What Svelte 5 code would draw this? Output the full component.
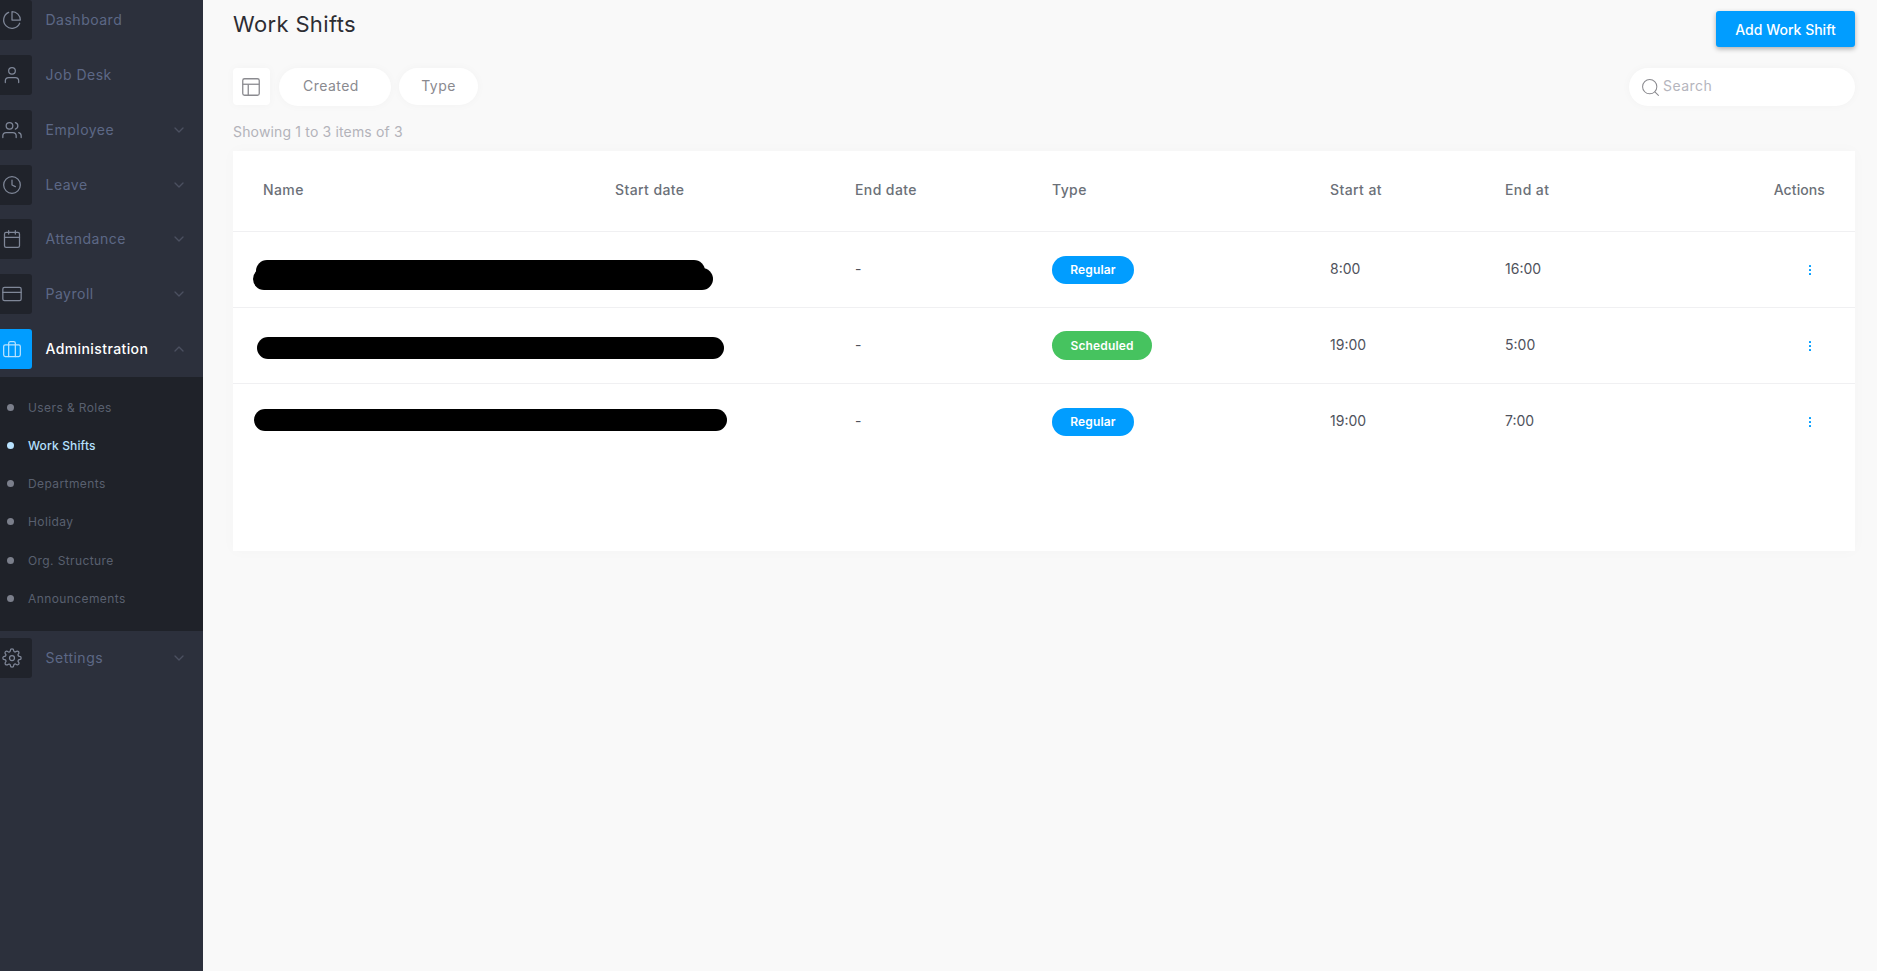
<script>
  const icons = {
    pie: '<path d="M21.21 15.89A10 10 0 1 1 8 2.83"/><path d="M22 12A10 10 0 0 0 12 2v10z"/>',
    user: '<path d="M20 21v-2a4 4 0 0 0-4-4H8a4 4 0 0 0-4 4v2"/><circle cx="12" cy="7" r="4"/>',
    users: '<path d="M17 21v-2a4 4 0 0 0-4-4H5a4 4 0 0 0-4 4v2"/><circle cx="9" cy="7" r="4"/><path d="M23 21v-2a4 4 0 0 0-3-3.87"/><path d="M16 3.13a4 4 0 0 1 0 7.75"/>',
    clock: '<circle cx="12" cy="12" r="10"/><polyline points="12 6 12 12 16 14"/>',
    calendar: '<rect x="3" y="4" width="18" height="18" rx="2"/><line x1="16" y1="2" x2="16" y2="6"/><line x1="8" y1="2" x2="8" y2="6"/><line x1="3" y1="10" x2="21" y2="10"/>',
    card: '<rect x="1" y="4" width="22" height="16" rx="2"/><line x1="1" y1="10" x2="23" y2="10"/>',
    briefcase: '<rect x="2" y="7" width="20" height="14" rx="2"/><path d="M16 21V5a2 2 0 0 0-2-2h-4a2 2 0 0 0-2 2v16"/>',
    settings: '<circle cx="12" cy="12" r="3"/><path d="M19.4 15a1.65 1.65 0 0 0 .33 1.82l.06.06a2 2 0 0 1 0 2.83 2 2 0 0 1-2.83 0l-.06-.06a1.65 1.65 0 0 0-1.82-.33 1.65 1.65 0 0 0-1 1.51V21a2 2 0 0 1-2 2 2 2 0 0 1-2-2v-.09A1.65 1.65 0 0 0 9 19.4a1.65 1.65 0 0 0-1.82.33l-.06.06a2 2 0 0 1-2.83 0 2 2 0 0 1 0-2.83l.06-.06a1.65 1.65 0 0 0 .33-1.82 1.65 1.65 0 0 0-1.51-1H3a2 2 0 0 1-2-2 2 2 0 0 1 2-2h.09A1.65 1.65 0 0 0 4.6 9a1.65 1.65 0 0 0-.33-1.82l-.06-.06a2 2 0 0 1 0-2.83 2 2 0 0 1 2.83 0l.06.06a1.65 1.65 0 0 0 1.82.33H9a1.65 1.65 0 0 0 1-1.51V3a2 2 0 0 1 2-2 2 2 0 0 1 2 2v.09a1.65 1.65 0 0 0 1 1.51 1.65 1.65 0 0 0 1.82-.33l.06-.06a2 2 0 0 1 2.83 0 2 2 0 0 1 0 2.83l-.06.06a1.65 1.65 0 0 0-.33 1.82V9a1.65 1.65 0 0 0 1.51 1H21a2 2 0 0 1 2 2 2 2 0 0 1-2 2h-.09a1.65 1.65 0 0 0-1.51 1z"/>'
  };
  const nav = [
    { label: 'Dashboard', icon: 'pie', chev: false },
    { label: 'Job Desk', icon: 'user', chev: false },
    { label: 'Employee', icon: 'users', chev: true },
    { label: 'Leave', icon: 'clock', chev: true },
    { label: 'Attendance', icon: 'calendar', chev: true },
    { label: 'Payroll', icon: 'card', chev: true }
  ];
  const sub = ['Users & Roles', 'Work Shifts', 'Departments', 'Holiday', 'Org. Structure', 'Announcements'];
  const rows = [
    { type: 'Regular', start: '8:00', end: '16:00', cls: 'blue', marks: ['m1a', 'm1b'] },
    { type: 'Scheduled', start: '19:00', end: '5:00', cls: 'green', marks: ['m2'] },
    { type: 'Regular', start: '19:00', end: '7:00', cls: 'blue', marks: ['m3'] }
  ];
</script>

<div class="app">
  <aside class="sidebar">
    {#each nav as n}
      <div class="nav">
        <span class="tile"><svg viewBox="0 0 24 24">{@html icons[n.icon]}</svg></span>
        <span class="label">{n.label}</span>
        {#if n.chev}<svg class="chev" viewBox="0 0 24 24"><polyline points="6 9 12 15 18 9"/></svg>{/if}
      </div>
    {/each}
    <div class="nav active">
      <span class="tile"><svg viewBox="0 0 24 24">{@html icons.briefcase}</svg></span>
      <span class="label">Administration</span>
      <svg class="chev" viewBox="0 0 24 24"><polyline points="18 15 12 9 6 15"/></svg>
    </div>
    <div class="submenu">
      {#each sub as s}
        <div class="subitem" class:on={s === 'Work Shifts'}><i></i><span>{s}</span></div>
      {/each}
    </div>
    <div class="nav">
      <span class="tile"><svg viewBox="0 0 24 24">{@html icons.settings}</svg></span>
      <span class="label">Settings</span>
      <svg class="chev" viewBox="0 0 24 24"><polyline points="6 9 12 15 18 9"/></svg>
    </div>
  </aside>

  <main class="main">
    <header class="head">
      <h1>Work Shifts</h1>
      <button class="add">Add Work Shift</button>
    </header>

    <div class="filters">
      <div class="left">
        <button class="square" aria-label="Layout">
          <svg viewBox="0 0 24 24"><rect x="3" y="3" width="18" height="18" rx="2"/><line x1="3" y1="9" x2="21" y2="9"/><line x1="9" y1="21" x2="9" y2="9"/></svg>
        </button>
        <button class="pill created">Created</button>
        <button class="pill type">Type</button>
      </div>
      <label class="search">
        <svg viewBox="0 0 24 24"><circle cx="11" cy="11" r="9"/><line x1="22" y1="22" x2="17.5" y2="17.5"/></svg>
        <input placeholder="Search" />
      </label>
    </div>

    <p class="count">Showing 1 to 3 items of 3</p>

    <section class="card">
      <div class="grid thead">
        <span>Name</span><span>Start date</span><span>End date</span><span>Type</span><span>Start at</span><span>End at</span><span class="act">Actions</span>
      </div>
      {#each rows as r}
        <div class="grid row">
          {#each r.marks as m}<b class="mark {m}"></b>{/each}
          <span></span><span></span>
          <span>-</span>
          <span class="bc"><em class="badge {r.cls}">{r.type}</em></span>
          <span>{r.start}</span>
          <span>{r.end}</span>
          <span class="act">
            <svg class="dots" viewBox="0 0 4 12"><rect x="1" y="1" width="2" height="2" rx="0.5"/><rect x="1" y="5" width="2" height="2" rx="0.5"/><rect x="1" y="9" width="2" height="2" rx="0.5"/></svg>
          </span>
        </div>
      {/each}
    </section>
  </main>
</div>

<style>
  :global(body) { margin: 0; background: #f9f9f9; }
  .app {
    display: flex;
    height: 971px;
    overflow: hidden;
    font-family: "Inter", "Open Sans", sans-serif;
  }
  .sidebar {
    width: 203px;
    flex: none;
    background: #2c303c;
  }
  .nav {
    height: 40px;
    display: flex;
    align-items: center;
    margin-bottom: 14.86px;
    color: #5d6886;
    font-size: 14px;
    letter-spacing: 0.5px;
  }
  .tile {
    width: 32px;
    height: 40px;
    flex: none;
    background: #20232b;
    border-radius: 0 3px 3px 0;
    display: flex;
    align-items: center;
    padding-left: 2px;
    box-sizing: border-box;
    margin-right: 13px;
  }
  .tile svg {
    width: 20px;
    height: 20px;
    fill: none;
    stroke: #7f8798;
    stroke-width: 1.5;
    stroke-linecap: round;
    stroke-linejoin: round;
  }
  .label { flex: 1; padding: 0 0 1px 0.5px; }
  .chev {
    width: 16px;
    height: 16px;
    margin-right: 16px;
    fill: none;
    stroke: #4b5060;
    stroke-width: 2;
    stroke-linecap: round;
    stroke-linejoin: round;
  }
  .nav.active { color: #fff; margin-bottom: 8px; font-weight: 500; letter-spacing: 0.4px; }
  .nav.active .tile { background: #019dff; }
  .nav.active .tile svg { stroke: #b9e3ff; }
  .submenu {
    background: #1f2229;
    height: 254px;
    box-sizing: border-box;
    padding-top: 11px;
    margin-bottom: 7px;
  }
  .subitem {
    height: 38.2px;
    display: flex;
    align-items: center;
    font-size: 12px;
    letter-spacing: 0.4px;
    color: #59606f;
  }
  .subitem i {
    width: 7px;
    height: 7px;
    border-radius: 50%;
    background: #7b7f8b;
    margin: 0 14px 0 7px;
  }
  .subitem.on { color: #b4e0ff; font-weight: 500; letter-spacing: 0.15px; }
  .subitem.on i { background: #b9e3ff; }

  .main {
    flex: 1;
    min-width: 0;
    padding: 11px 22px 0 30px;
    background: #f9f9f9;
  }
  .head {
    display: flex;
    justify-content: space-between;
    align-items: flex-start;
  }
  h1 {
    margin: 0;
    font-size: 22px;
    line-height: 27px;
    font-weight: 400;
    letter-spacing: 0.35px;
    color: #2d2d33;
  }
  .add {
    width: 139px;
    height: 36px;
    border: 0;
    border-radius: 3px;
    background: #019dff;
    color: #fff;
    font: 500 14px "Inter", sans-serif;
    box-shadow: 0 2px 5px rgba(0, 0, 0, 0.3);
  }
  .filters {
    display: flex;
    justify-content: space-between;
    margin-top: 21px;
  }
  .left { display: flex; gap: 8px; align-items: flex-start; }
  button { padding: 0; }
  .square, .pill, .search {
    background: #fff;
    border: 0;
    box-shadow: 0 0 10px rgba(0, 0, 0, 0.03);
  }
  .square {
    width: 37px;
    height: 37px;
    border-radius: 4px;
    margin-right: 1px;
    display: flex;
    align-items: center;
    justify-content: center;
    padding-right: 1px;
  }
  .square svg {
    width: 22px;
    height: 22px;
    fill: none;
    stroke: #8a8a8f;
    stroke-width: 1.4;
  }
  .pill {
    height: 38px;
    border-radius: 19px;
    font: 400 14px "Inter", sans-serif;
    color: #8a8a8f;
    letter-spacing: 0.45px;
    padding-bottom: 3px;
  }
  .created { width: 112px; padding-right: 8px; }
  .type { width: 79px; height: 37px; }
  .search {
    width: 226px;
    height: 38px;
    border-radius: 19px;
    display: flex;
    align-items: center;
    padding-left: 12px;
    box-sizing: border-box;
  }
  .search svg {
    width: 19px;
    height: 19px;
    flex: none;
    fill: none;
    stroke: #8a8a8f;
    stroke-width: 1.3;
    stroke-linecap: round;
  }
  .search input {
    border: 0;
    outline: 0;
    background: none;
    width: 170px;
    margin: 0 0 3px 3px;
    padding: 0;
    font: 400 14px "Inter", sans-serif;
    letter-spacing: 0.45px;
  }
  .search input::placeholder { color: #b5b5bd; }
  .count {
    margin: 16px 0 9px;
    line-height: 20px;
    font-size: 14px;
    letter-spacing: 0.16px;
    color: #b3b3ba;
  }
  .card {
    height: 400px;
    background: #fff;
    box-shadow: 0 0 14px rgba(0, 0, 0, 0.025);
  }
  .grid {
    display: grid;
    grid-template-columns: 352px 240px 197px 278px 175px 1fr 120px;
    align-items: center;
    padding: 0 30px;
    position: relative;
    font-size: 14px;
  }
  .thead {
    height: 80px;
    padding-bottom: 3px;
    box-sizing: border-box;
    font-weight: 500;
    letter-spacing: 0.4px;
    color: #6b7078;
  }
  .thead .act { letter-spacing: 0.1px; }
  .row {
    height: 76px;
    box-sizing: border-box;
    border-top: 1px solid #f0f0f2;
    color: #4f525c;
  }
  .row > span { margin-top: -2px; }
  .row > .bc { margin-top: 0; }
  .act { text-align: right; }
  .dots {
    width: 4px;
    height: 12px;
    fill: #019dff;
    display: inline-block;
    margin-right: 13px;
    vertical-align: middle;
  }
  .badge {
    display: inline-block;
    height: 28px;
    line-height: 28px;
    border-radius: 14px;
    font-style: normal;
    font-weight: 600;
    font-size: 12px;
    letter-spacing: 0.15px;
    color: #fff;
    text-align: center;
    vertical-align: middle;
  }
  .blue { background: #019dff; width: 82px; }
  .green { background: #46c35f; width: 100px; height: 29px; line-height: 29px; border-radius: 15px; }
  .mark {
    position: absolute;
    background: #000;
    border-radius: 11px;
  }
  .m1a { left: 23px; top: 28px; width: 449px; height: 22px; }
  .m1b { left: 20px; top: 36px; width: 460px; height: 22px; }
  .m2 { left: 24px; top: 29px; width: 467px; height: 22px; }
  .m3 { left: 21px; top: 25px; width: 473px; height: 22px; }
</style>
